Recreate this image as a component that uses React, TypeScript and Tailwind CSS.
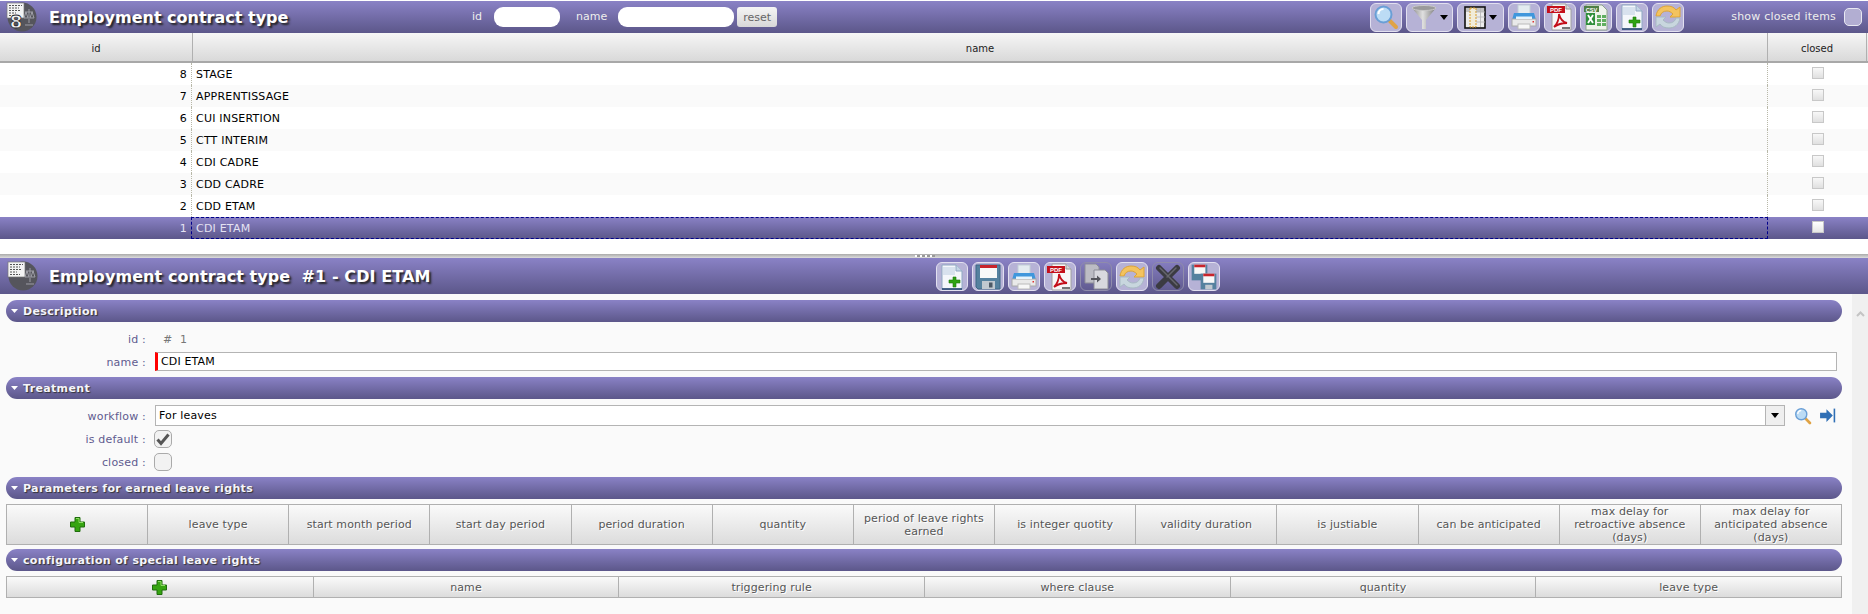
import type { ReactNode } from "react";

const BAR = "bg-gradient-to-b from-[#8a82c6] to-[#5c578a]";
const ROWS = [
  [8, "STAGE"],
  [7, "APPRENTISSAGE"],
  [6, "CUI INSERTION"],
  [5, "CTT INTERIM"],
  [4, "CDI CADRE"],
  [3, "CDD CADRE"],
  [2, "CDD ETAM"],
] as const;

const LEAVE_COLS = [
  "leave type",
  "start month period",
  "start day period",
  "period duration",
  "quantity",
  "period of leave rights earned",
  "is integer quotity",
  "validity duration",
  "is justiable",
  "can be anticipated",
  "max delay for retroactive absence (days)",
  "max delay for anticipated absence (days)",
];
const SPECIAL_COLS = ["name", "triggering rule", "where clause", "quantity", "leave type"];

function Logo({ eight }: { eight?: boolean }) {
  return (
    <svg width="32" height="32" viewBox="0 0 32 32" className="shrink-0">
      <circle cx="17" cy="16" r="14.500" fill="#55555c" />
      <rect x="2" y="2" width="17" height="15" fill="#f3f3f3" stroke="#777" strokeWidth="0.7" />
      <path d="M4 4.500h13M4 7h10M4 9.500h12M4 12h7M4 14.500h10" stroke="#555" strokeWidth="1" strokeDasharray="2 1" />
      <path d="M24 8v14M20 11h8M21 11l-2 6h4zM27 11l-2 6h4zM20 24h8" stroke="#a5a5ae" strokeWidth="0.9" fill="none" />
      {eight && (
        <text
          x="11"
          y="27"
          textAnchor="middle"
          fontSize="18"
          fontWeight="700"
          fill="#f4f4f4"
          stroke="#2a2a30"
          strokeWidth="0.8"
          fontFamily="DejaVu Sans, sans-serif"
        >
          8
        </text>
      )}
    </svg>
  );
}

function Magnifier({ size = 26 }: { size?: number }) {
  return (
    <svg width={size} height={size} viewBox="0 0 26 26">
      <path d="M15 15l8 8" stroke="#e0a345" strokeWidth="4" strokeLinecap="round" />
      <circle cx="10.500" cy="10.500" r="8" fill="#bcdcf5" stroke="#6a9fd6" strokeWidth="2" />
      <path d="M5.500 10a5 5 0 0 1 5-5" stroke="#fff" strokeWidth="2" fill="none" />
    </svg>
  );
}

function Funnel() {
  return (
    <svg width="26" height="26" viewBox="0 0 26 26">
      <defs>
        <linearGradient id="fn" x1="0" x2="1">
          <stop offset="0" stopColor="#8d8d8d" />
          <stop offset="0.45" stopColor="#e0e0e0" />
          <stop offset="1" stopColor="#7a7a7a" />
        </linearGradient>
      </defs>
      <path d="M1 4l10 12v9h4V16L25 4z" fill="url(#fn)" />
      <ellipse cx="13" cy="4" rx="12" ry="2.500" fill="#9a9a9a" stroke="#c9c9c9" />
    </svg>
  );
}

function ColumnsIcon() {
  return (
    <svg width="22" height="23" viewBox="0 0 22 23">
      <rect x="1" y="1" width="20" height="21" fill="#ececec" stroke="#111" strokeWidth="1.600" />
      <rect x="2" y="2" width="18" height="4" fill="#c2c2c2" />
      <rect x="6" y="2" width="6" height="19" fill="#f1ecd9" stroke="#d89a22" strokeWidth="1" strokeDasharray="2 1" />
      <path d="M12 6h9M12 11h9M12 16h9M16.500 2v19" stroke="#b4b4b4" strokeWidth="0.800" />
    </svg>
  );
}

function Printer() {
  return (
    <svg width="28" height="26" viewBox="0 0 28 26">
      <rect x="8" y="1" width="12" height="11" fill="#e3ebf0" stroke="#c2ced6" />
      <path d="M4 9h20l2 7H2z" fill="#3f97dc" />
      <rect x="2" y="15" width="24" height="7" fill="#e9e9e9" stroke="#a8a8a8" />
      <rect x="6" y="12.500" width="16" height="2.500" fill="#e4f3fc" />
      <rect x="8" y="20" width="12" height="5" fill="#f7f7f7" stroke="#bbb" />
      <rect x="22.500" y="17" width="1.500" height="1.500" fill="#d33" />
    </svg>
  );
}

function PdfIcon() {
  return (
    <svg width="28" height="28" viewBox="0 0 28 28">
      <path d="M6 1h14l5 5v21H6z" fill="#f7f7f7" stroke="#a0a0a0" />
      <path d="M20 1v5h5" fill="#d5d5d5" stroke="#999" />
      <rect x="1" y="3" width="18" height="7" fill="#c4101a" />
      <text x="10" y="9" textAnchor="middle" fontSize="6" fontWeight="700" fill="#fff" fontFamily="Liberation Sans, sans-serif">PDF</text>
      <path d="M8 24c3-3 5-8 5-13 1 4 3 8 8 9-4 0-9 1-13 4z" fill="none" stroke="#c4101a" strokeWidth="1.800" />
      <rect x="16" y="24" width="8" height="2" fill="#777" />
    </svg>
  );
}

function CsvIcon() {
  return (
    <svg width="26" height="27" viewBox="0 0 26 27">
      <path d="M3 1h16l5 5v20H3z" fill="#eef3ec" stroke="#8fa58c" />
      <rect x="1" y="2" width="15" height="6" fill="#4f7f45" />
      <text x="8.500" y="7.500" textAnchor="middle" fontSize="5.500" fontWeight="700" fill="#fff" fontFamily="Liberation Sans, sans-serif">CSV</text>
      <path d="M3 9h9v12H3z" fill="#2f8f3c" />
      <path d="M5 11l5 8M10 11l-5 8" stroke="#fff" strokeWidth="1.800" />
      <path d="M14 11h4v3h-4zM19 11h4v3h-4zM14 15h4v3h-4zM19 15h4v3h-4zM14 19h4v3h-4zM19 19h4v3h-4z" fill="#5fae5f" />
    </svg>
  );
}

function Plus({ size = 15 }: { size?: number }) {
  return (
    <svg width={size} height={size} viewBox="0 0 15 15">
      <path d="M5 .5h5v4.500h4.500v5H10v4.500H5V10H.5V5H5z" fill="#36a411" stroke="#1f6d0c" strokeWidth="1" />
      <path d="M6 1.500h3v4h4" fill="none" stroke="#8fdc63" strokeWidth="1" />
    </svg>
  );
}

function NewFile() {
  return (
    <svg width="26" height="26" viewBox="0 0 26 26">
      <path d="M3 1h14l6 6v18H3z" fill="#f4f7fb" stroke="#8fa8c2" />
      <path d="M3 25h20" stroke="#1c3f6b" strokeWidth="1.500" />
      <rect x="4" y="3" width="12" height="8" fill="#d8e2ee" />
      <path d="M17 1v6h6" fill="#c6d5e6" stroke="#8fa8c2" />
      <path d="M14 13h3v3h4v3h-4v4h-3v-4h-4v-3h4z" fill="#2ea313" stroke="#1c780a" strokeWidth="0.600" />
    </svg>
  );
}

function Refresh() {
  return (
    <svg width="28" height="26" viewBox="0 0 28 26">
      <path d="M2 12C3 5 8 2 13 2c4 0 7 1 9 4l4-3v10H16l3-3c-2-2-4-3-6-3-4 0-6 2-7 5z" fill="#f3c35f" stroke="#dca437" />
      <path d="M26 14c-1 7-6 10-11 10-4 0-7-1-9-4l-4 3V13h10l-3 3c2 2 4 3 6 3 4 0 6-2 7-5z" fill="#c8d6de" stroke="#a8b9c3" />
    </svg>
  );
}

function Floppy() {
  return (
    <svg width="26" height="26" viewBox="0 0 26 26">
      <path d="M1 1h24v24H3l-2-2z" fill="#55819f" stroke="#3f6785" />
      <rect x="5" y="1" width="17" height="13" fill="#f8f8f8" />
      <rect x="5" y="1" width="17" height="3" fill="#c8242c" />
      <rect x="7" y="17" width="13" height="8" fill="#c0c8d0" />
      <rect x="14" y="18.500" width="3.500" height="5" fill="#4c5966" />
    </svg>
  );
}

function CopyIcon() {
  return (
    <svg width="27" height="27" viewBox="0 0 27 27">
      <path d="M2 1h11l3 3v16H2z" fill="#bcbcc4" stroke="#8d8d97" />
      <path d="M11 7h11l3 3v16H11z" fill="#d8d8de" stroke="#8d8d97" />
      <path d="M8 16h8" stroke="#55555c" strokeWidth="2" />
      <path d="M14 12.500l4 3.500-4 3.500z" fill="#55555c" />
    </svg>
  );
}

function Cross() {
  return (
    <svg width="26" height="26" viewBox="0 0 26 26">
      <path d="M4 4l18 18M22 4L4 22" stroke="#3b3b42" strokeWidth="6" strokeLinecap="round" />
      <path d="M5 4l17 17M21 4L12 13" stroke="#66666e" strokeWidth="1.500" strokeLinecap="round" />
    </svg>
  );
}

function MultiSave() {
  return (
    <svg width="26" height="26" viewBox="0 0 26 26">
      <svg x="0" y="0" width="17" height="17" viewBox="0 0 26 26">
        <path d="M1 1h24v24H1z" fill="#55819f" />
        <rect x="5" y="1" width="17" height="14" fill="#f8f8f8" />
        <rect x="5" y="1" width="17" height="4" fill="#c8242c" />
      </svg>
      <svg x="9" y="9" width="17" height="17" viewBox="0 0 26 26">
        <path d="M1 1h24v24H1z" fill="#55819f" />
        <rect x="5" y="1" width="17" height="14" fill="#f8f8f8" />
        <rect x="5" y="1" width="17" height="4" fill="#c8242c" />
        <rect x="8" y="18" width="11" height="7" fill="#c0c8d0" />
      </svg>
    </svg>
  );
}

function Caret({ color = "#000" }: { color?: string }) {
  return (
    <svg width="8" height="5" viewBox="0 0 8 5">
      <path d="M0 0h8L4 5z" fill={color} />
    </svg>
  );
}

function ToolButton({ children, wide, off }: { children: ReactNode; wide?: boolean; off?: boolean }) {
  return (
    <button
      className={`flex h-[29px] items-center justify-center gap-[3px] rounded-[6px] border-[1.5px] ${
        wide ? "w-[47px]" : "w-[32px]"
      } ${off ? "border-[#8f8cab]" : "border-[#e2e0f0] bg-[#b6b2d6]"}`}
    >
      {children}
    </button>
  );
}

function SectionBar({ title }: { title: string }) {
  return (
    <div className={`flex h-[22px] items-center gap-[5px] rounded-[11px] pl-[5px] ${BAR}`}>
      <svg width="7" height="4" viewBox="0 0 7 4">
        <path d="M0 0h7L3.500 4z" fill="#fff" />
      </svg>
      <span className="text-[11px] leading-none font-bold tracking-[0.35px] text-[#f5f5fb] [text-shadow:1px_1px_1px_#333]">{title}</span>
    </div>
  );
}

function ClosedBox({ selected }: { selected?: boolean }) {
  return (
    <span
      className={`block h-[12px] w-[12px] border border-[#c8c8c8] ${
        selected ? "bg-gradient-to-b from-[#fff] to-[#e6e6e6]" : "bg-gradient-to-b from-[#f8f8f8] to-[#e0e0e0]"
      }`}
    />
  );
}

function Label({ children }: { children: ReactNode }) {
  return (
    <span className="w-[146px] pt-[3px] pr-[6px] text-right text-[11px] tracking-[0.2px] text-[#5f5a8f]">
      {children} :
    </span>
  );
}

function HeaderCell({ children, className = "" }: { children: ReactNode; className?: string }) {
  return (
    <div
      className={`flex items-center justify-center border-l border-[#b0b0b0] px-1 text-center leading-[13px] first:border-l-0 ${className}`}
    >
      {children}
    </div>
  );
}

function TableCell({ children }: { children: ReactNode }) {
  return (
    <HeaderCell className="text-[11px] tracking-[0.1px] text-[#555] [text-shadow:1px_1px_0_#fff]">{children}</HeaderCell>
  );
}

export default function App() {
  return (
    <div className="flex h-[614px] w-[1868px] flex-col overflow-hidden bg-white font-['DejaVu_Sans',sans-serif]">
      {/* list part */}
      <div className={`mt-[1px] flex h-[32px] items-center pl-[5px] pr-[6px] ${BAR}`}>
        <Logo eight />
        <span className="ml-[12px] w-[423px] pt-[2px] text-[16px] font-bold whitespace-nowrap text-white [text-shadow:2px_2px_2px_#222]">
          Employment contract type
        </span>
        <span className="text-[11px] text-[#eee]">id</span>
        <span className="ml-[12px] h-[20px] w-[66px] rounded-[9px] bg-white" />
        <span className="ml-[16px] text-[11px] text-[#eee]">name</span>
        <span className="ml-[11px] h-[20px] w-[116px] rounded-[9px] bg-white" />
        <button className="ml-[3px] h-[20px] w-[40px] rounded-[3px] bg-gradient-to-b from-[#f5f5f5] to-[#d8d8d8] text-[11px] leading-none text-[#666]">
          reset
        </button>
        <div className="ml-[593px] flex items-center gap-[4px]">
          <ToolButton><Magnifier /></ToolButton>
          <ToolButton wide><Funnel /><Caret /></ToolButton>
          <ToolButton wide><ColumnsIcon /><Caret /></ToolButton>
          <ToolButton><Printer /></ToolButton>
          <ToolButton><PdfIcon /></ToolButton>
          <ToolButton><CsvIcon /></ToolButton>
          <ToolButton><NewFile /></ToolButton>
          <ToolButton><Refresh /></ToolButton>
        </div>
        <span className="ml-auto text-[11px] tracking-[0.2px] whitespace-nowrap text-[#eee]">show closed items</span>
        <span className="ml-[8px] h-[18px] w-[18px] rounded-[5px] border border-[#e8e8f2] bg-[#b2aed2]" />
      </div>

      <div className="flex h-[30px] border-b-2 border-[#a8a8a8] bg-gradient-to-b from-[#f6f6f6] to-[#d9d9d9] text-[10px] text-[#222]">
        <HeaderCell className="w-[192px] pt-[2px]">id</HeaderCell>
        <HeaderCell className="flex-1 pt-[2px]">name</HeaderCell>
        <HeaderCell className="w-[99px] pt-[2px]">closed</HeaderCell>
        <span className="w-[2px] border-l border-[#b0b0b0]" />
      </div>

      {ROWS.map(([id, name], i) => (
        <div key={id} className={`flex h-[22px] items-center text-[11px] tracking-[0.2px] text-black ${i % 2 ? "bg-[#fafafa]" : "bg-white"}`}>
          <span className="flex h-full w-[192px] items-center justify-end border-r border-dotted border-[#b8b8a8] pt-[2px] pr-[4px]">{id}</span>
          <span className="flex-1 pt-[2px] pl-[4px]">{name}</span>
          <span className="flex h-full w-[101px] items-center justify-center border-l border-dotted border-[#b8b8a8] pb-[2px]">
            <ClosedBox />
          </span>
        </div>
      ))}
      <div className={`flex h-[22px] items-center text-[11px] tracking-[0.2px] text-[#e4e2f2] ${BAR}`}>
        <span className="w-[191px] pt-[2px] pr-[4px] text-right">1</span>
        <span className="flex h-full flex-1 items-center border border-dashed border-[#00008b] pt-[2px] pl-[4px]">CDI ETAM</span>
        <span className="flex w-[100px] justify-center pb-[2px]">
          <ClosedBox selected />
        </span>
      </div>

      <div className="h-[15px]" />
      <div className="relative h-[4px] bg-gradient-to-b from-[#aaa] to-[#ddd]">
        <span className="absolute left-[915px] top-[1px] h-[2px] w-[20px] bg-[repeating-linear-gradient(90deg,#fff_0_2px,#999_2px_5px)]" />
      </div>

      {/* detail part */}
      <div className={`relative flex h-[36px] items-center pl-[6px] ${BAR}`}>
        <Logo />
        <span className="ml-[11px] pt-[2px] text-[16px] font-bold tracking-[0.08px] whitespace-pre text-white [text-shadow:2px_2px_2px_#222]">
          Employment contract type  #1 - CDI ETAM
        </span>
        <div className="absolute left-[936px] top-[4px] flex gap-[4px]">
          <ToolButton><NewFile /></ToolButton>
          <ToolButton><Floppy /></ToolButton>
          <ToolButton><Printer /></ToolButton>
          <ToolButton><PdfIcon /></ToolButton>
          <ToolButton off><CopyIcon /></ToolButton>
          <ToolButton><Refresh /></ToolButton>
          <ToolButton off><Cross /></ToolButton>
          <ToolButton><MultiSave /></ToolButton>
        </div>
      </div>

      <div className="flex min-h-0 flex-1 bg-[#fafafa]">
        <div className="flex w-[1852px] flex-col pl-[6px] pr-[10px] pt-[6px]">
          <SectionBar title="Description" />
          <div className="flex h-[30px] items-center pt-[3px] text-[11px]">
            <Label>id</Label>
            <span className="ml-[11px] pt-[3px] tracking-[0.3px] text-[#777]">#&nbsp;&nbsp;1</span>
          </div>
          <div className="flex h-[19px] items-center">
            <Label>name</Label>
            <div className="ml-[3px] mr-[5px] flex h-[19px] flex-1 items-center border border-l-[3px] border-[#b4b4b4] border-l-[#f00] bg-white pt-[1px] pl-[3px] text-[11px] tracking-[0.15px] text-black">
              CDI ETAM
            </div>
          </div>

          <div className="mt-[6px]">
            <SectionBar title="Treatment" />
          </div>
          <div className="mt-[6px] flex h-[21px] items-center">
            <Label>workflow</Label>
            <div className="ml-[3px] flex h-[21px] w-[1630px] items-center border border-[#b4b4b4] bg-white pl-[3px] text-[11px] tracking-[0.15px] text-black">
              <span className="flex-1 pt-[2px]">For leaves</span>
              <span className="flex h-full w-[19px] items-center justify-center border-l border-[#b4b4b4] bg-[#efefef]">
                <Caret />
              </span>
            </div>
            <span className="ml-[9px]"><Magnifier size={18} /></span>
            <svg width="17" height="17" viewBox="0 0 16 16" className="ml-[7px]">
              <path d="M1 5.500h6V2l6 6-6 6v-3.500H1z" fill="#2f6fb5" />
              <path d="M14.500 1.500v13" stroke="#2f6fb5" strokeWidth="1.500" />
            </svg>
          </div>
          <div className="mt-[4px] flex h-[18px] items-center">
            <Label>is default</Label>
            <span className="ml-[2px] flex h-[18px] w-[18px] items-center justify-center rounded-[5px] border border-[#aaa] bg-[#f2f2f2]">
              <svg width="14" height="13" viewBox="0 0 14 13">
                <path d="M1.500 6.500l3.500 4L12.500 1.500" fill="none" stroke="#555" strokeWidth="3" />
              </svg>
            </span>
          </div>
          <div className="mt-[5px] flex h-[18px] items-center">
            <Label>closed</Label>
            <span className="ml-[2px] h-[18px] w-[18px] rounded-[5px] border border-[#aaa] bg-[#f2f2f2]" />
          </div>

          <div className="mt-[6px]">
            <SectionBar title="Parameters for earned leave rights" />
          </div>
          <div className="mt-[5px] grid h-[41px] grid-cols-[140px_repeat(12,1fr)] border border-[#b0b0b0] bg-gradient-to-b from-[#fafafa] to-[#dcdcdc]">
            <TableCell><Plus /></TableCell>
            {LEAVE_COLS.map((c) => (
              <TableCell key={c}>{c}</TableCell>
            ))}
          </div>

          <div className="mt-[4px]">
            <SectionBar title="configuration of special leave rights" />
          </div>
          <div className="mt-[5px] grid h-[22px] grid-cols-6 border border-[#b0b0b0] bg-gradient-to-b from-[#fafafa] to-[#dcdcdc]">
            <TableCell><Plus /></TableCell>
            {SPECIAL_COLS.map((c) => (
              <TableCell key={c}>{c}</TableCell>
            ))}
          </div>
        </div>

        {/* scrollbar */}
        <div className="flex w-[16px] justify-center bg-[#f0f0f0] pt-[17px]">
          <svg width="9" height="6" viewBox="0 0 9 6">
            <path d="M1 5l3.500-3.500L8 5" fill="none" stroke="#c4c4c4" strokeWidth="2" />
          </svg>
        </div>
      </div>
    </div>
  );
}
